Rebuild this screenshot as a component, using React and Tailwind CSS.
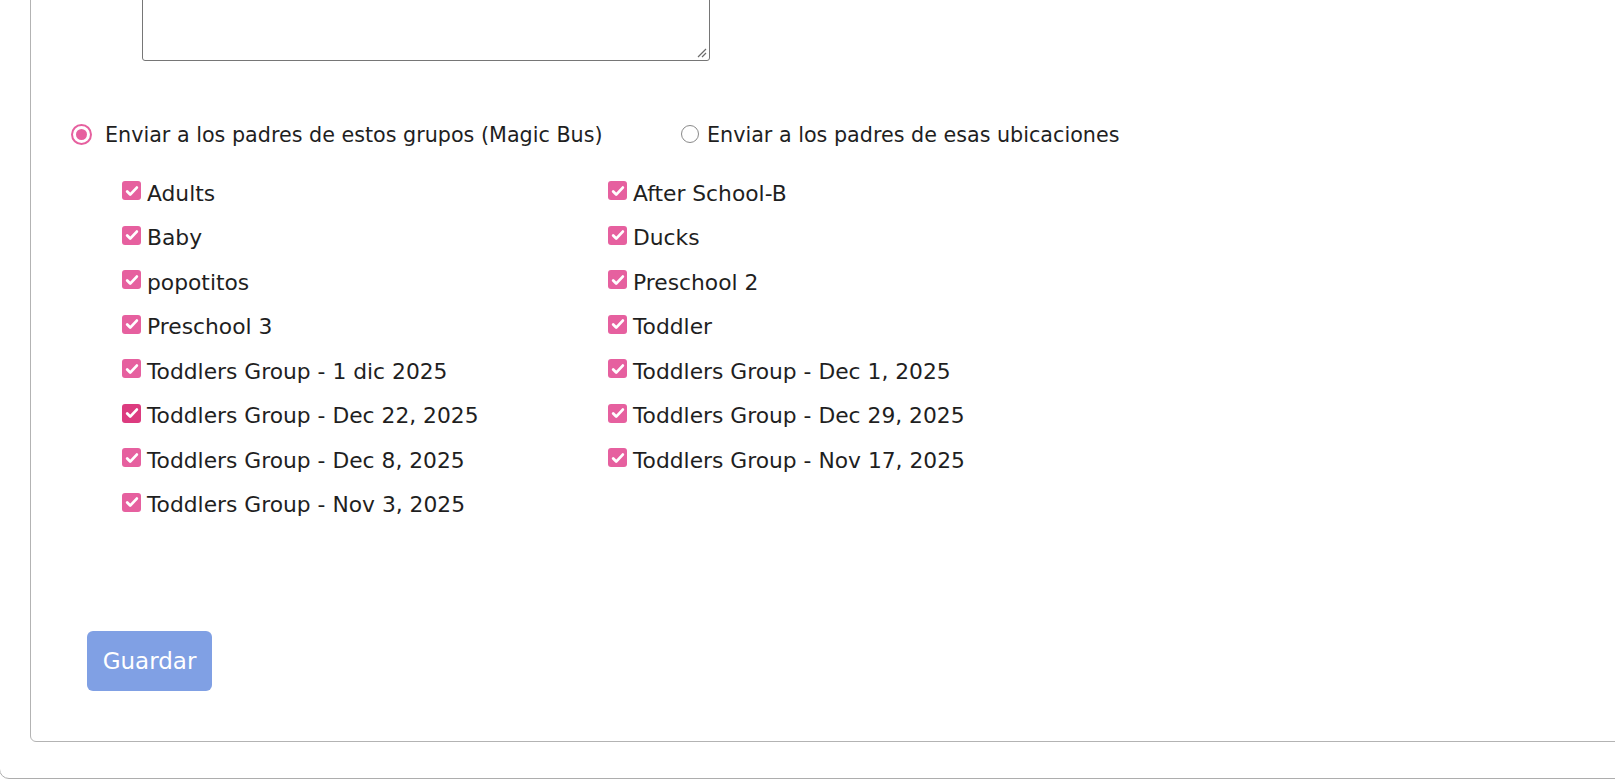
import { useState } from "react";

const groups = [
  "Adults",
  "After School-B",
  "Baby",
  "Ducks",
  "popotitos",
  "Preschool 2",
  "Preschool 3",
  "Toddler",
  "Toddlers Group - 1 dic 2025",
  "Toddlers Group - Dec 1, 2025",
  "Toddlers Group - Dec 22, 2025",
  "Toddlers Group - Dec 29, 2025",
  "Toddlers Group - Dec 8, 2025",
  "Toddlers Group - Nov 17, 2025",
  "Toddlers Group - Nov 3, 2025",
];

function CheckBox({ active }) {
  return (
    <span
      className={`mb-[7px] mr-[6px] flex h-[19px] w-[19px] shrink-0 items-center justify-center rounded-[3px] ${
        active ? "bg-[#dc3b7f]" : "bg-[#e6609f]"
      }`}
    >
      <svg viewBox="0 0 16 16" className="h-[16px] w-[16px]" fill="none">
        <path d="M3.2 8.6l3 3L12.8 4.6" stroke="#fff" strokeWidth="2.8" strokeLinecap="round" strokeLinejoin="round" />
      </svg>
    </span>
  );
}

export default function App() {
  const [mode, setMode] = useState("groups");

  return (
    <div className="h-[779px] w-[1615px] overflow-hidden bg-white font-['DejaVu_Sans',sans-serif] text-[#1f1f1f]">
      <div className="-ml-px -mt-[100px] h-[879px] w-[1700px] rounded-[10px] border border-[#adadad] pb-[36px] pl-[30px]">
        <div className="h-full rounded-[6px] border border-[#b3b3b3]">
          <div className="relative ml-[111px] mt-[39px] h-[120px] w-[568px] rounded-[3px] border border-[#767676] bg-white">
            <svg className="absolute bottom-[2px] right-[2px] h-[10px] w-[10px]" viewBox="0 0 10 10">
              <path d="M1 9L9 1M5 9L9 5" stroke="#6b6b6b" strokeWidth="1.2" />
            </svg>
          </div>

          <div className="ml-[40px] mt-[60px] flex h-[30px] items-center text-[20.7px]">
            <label className="flex w-[610px] items-center" onClick={() => setMode("groups")}>
              <span className="mb-[4px] mr-[13px] flex h-[21px] w-[21px] items-center justify-center rounded-full border-[2.5px] border-[#e6609f] bg-white">
                {mode === "groups" && <span className="h-[11px] w-[11px] rounded-full bg-[#e6609f]" />}
              </span>
              Enviar a los padres de estos grupos (Magic Bus)
            </label>
            <label className="flex items-center" onClick={() => setMode("locations")}>
              <span className="mb-[4px] mr-[8px] flex h-[18px] w-[18px] items-center justify-center rounded-full border border-[#8a8a8a] bg-white">
                {mode === "locations" && <span className="h-[9px] w-[9px] rounded-full bg-[#e6609f]" />}
              </span>
              Enviar a los padres de esas ubicaciones
            </label>
          </div>

          <div className="ml-[91px] mt-[21px] grid grid-cols-[486px_486px] auto-rows-[44.5px] text-[21.8px]">
            {groups.map((g) => (
              <div key={g} className="flex items-center">
                <CheckBox active={g === "Toddlers Group - Dec 22, 2025"} />
                <span>{g}</span>
              </div>
            ))}
          </div>

          <button className="ml-[56px] mt-[103px] flex h-[60px] w-[125px] items-center justify-center rounded-[6px] bg-[#80a0e4] text-[23px] text-white">
            Guardar
          </button>
        </div>
      </div>
    </div>
  );
}
